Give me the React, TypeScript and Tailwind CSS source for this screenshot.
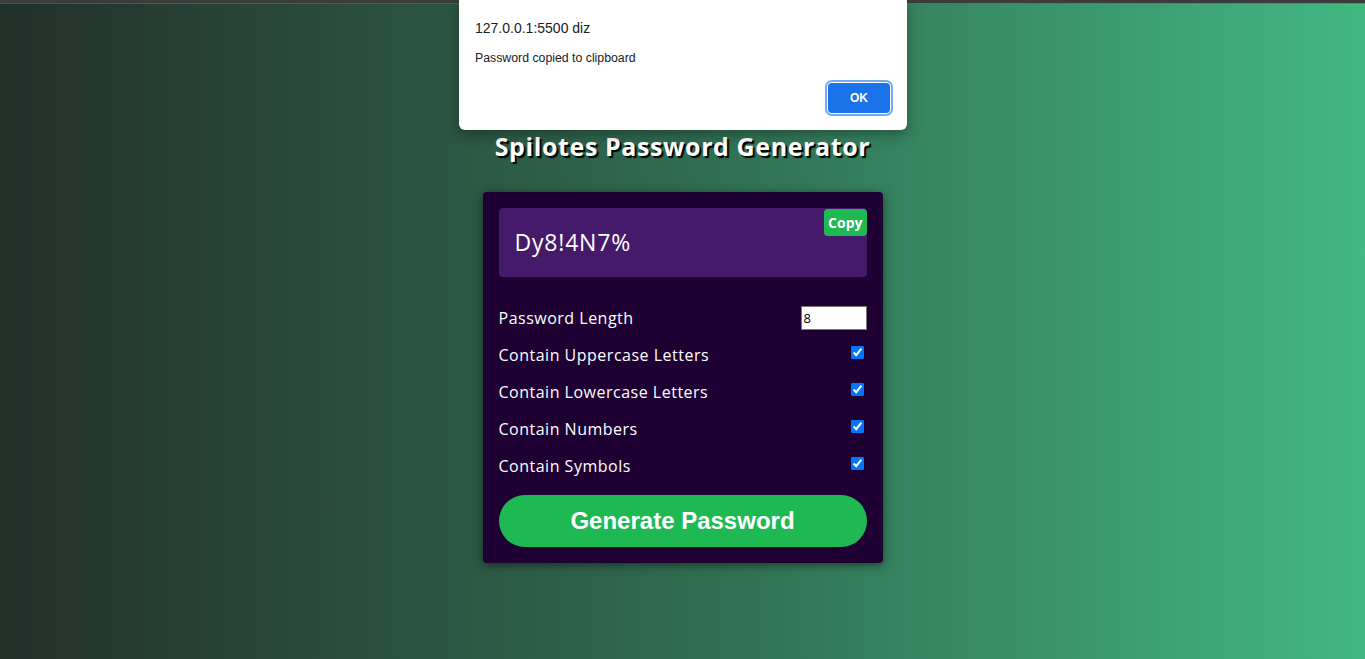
import type React from "react";

const options = [
  "Contain Uppercase Letters",
  "Contain Lowercase Letters",
  "Contain Numbers",
  "Contain Symbols",
];

const App: React.FC = () => {
  return (
    <div className="relative w-full h-[659px] overflow-hidden bg-gradient-to-r from-[#22302a] via-[#2f6b50] to-[#42b883] font-['Open_Sans',sans-serif]">
      {/* browser top strip */}
      <div className="h-[3px] bg-[#3c3c3c]" />
      <div className="h-px bg-[#6b6b6b]/60" />

      <div className="flex flex-col items-center pt-[124px]">
        <h1 className="text-[25px] font-bold text-white tracking-[0.6px] [text-shadow:2px_2px_1px_#000]">
          Spilotes Password Generator
        </h1>

        {/* Card */}
        <div className="mt-[26px] w-[400px] bg-[#1e0033] rounded p-4 shadow-[0_2px_10px_rgba(0,0,0,0.5)]">
          <div className="relative h-[69px] bg-[#461a6a] rounded flex items-center px-4">
            <span className="text-[23px] text-white tracking-[0.8px]">Dy8!4N7%</span>
            <button className="absolute top-px right-0 h-[27px] px-1 rounded bg-[#1fb954] text-white text-[14px] font-bold">
              Copy
            </button>
          </div>

          <div className="mt-[29px] flex items-center justify-between h-[24px]">
            <span className="text-white text-[16px] tracking-[0.5px]">Password Length</span>
            <input
              type="number"
              defaultValue={8}
              className="w-[66px] h-[24px] bg-white text-black text-[13px] px-0.5 border border-[#767676] outline-none [appearance:textfield]"
            />
          </div>

          <div className="flex flex-col -mt-px">
            {options.map((label) => (
              <div key={label} className="flex items-center justify-between h-[37px]">
                <span className="text-white text-[16px] tracking-[0.5px] pt-[15px]">{label}</span>
                <input type="checkbox" defaultChecked className="w-[13px] h-[13px] mr-[3px] accent-[#0075ff] mt-[10px]" />
              </div>
            ))}
          </div>

          <button className="mt-[18px] w-full h-[52px] rounded-full bg-[#1fb954] text-white text-[24px] font-bold font-['Liberation_Sans',Arial,sans-serif]">
            Generate Password
          </button>
        </div>
      </div>

      {/* alert dialog */}
      <div className="absolute left-[459px] top-0 w-[448px] h-[130px] bg-white rounded-b-md shadow-[0_4px_14px_rgba(0,0,0,0.35)] px-4 pt-[18px] font-['Liberation_Sans',Arial,sans-serif]">
        <div className="text-[14px] text-[#202124]">127.0.0.1:5500 diz</div>
        <div className="mt-[10px] text-[12.3px] text-[#202124]">Password copied to clipboard</div>
        <div className="flex justify-end mt-[16px]">
          <button className="w-[62px] h-[30px] rounded bg-[#1a73e8] text-white text-[12px] font-bold ring-2 ring-[#1a73e8]/60 ring-offset-1 mr-[1px]">
            OK
          </button>
        </div>
      </div>
    </div>
  );
};

export default App;
